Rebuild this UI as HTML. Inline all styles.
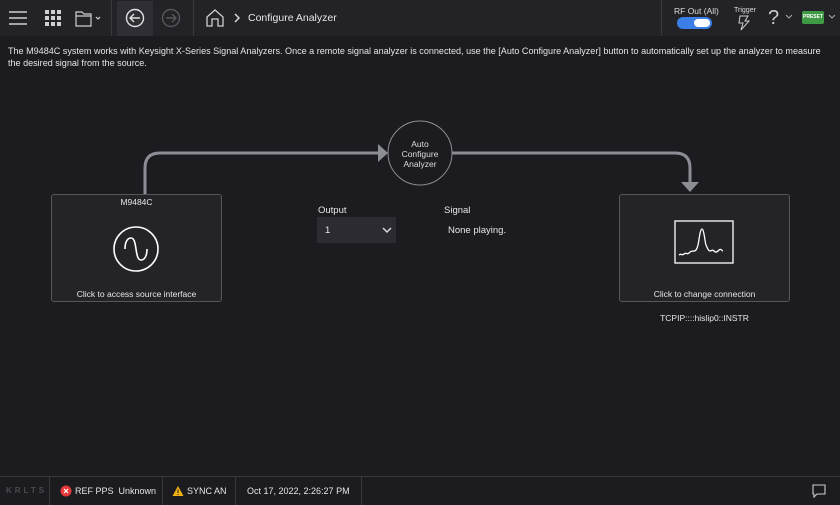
<!DOCTYPE html>
<html><head><meta charset="utf-8"><style>
*{margin:0;padding:0;box-sizing:border-box}
body{width:840px;height:504px;background:#1c1b20;font-family:"Liberation Sans",sans-serif;color:#e6e6e6;position:relative;overflow:hidden;font-size:11px}
.abs{position:absolute}
.top{left:0;top:0;width:840px;height:36px;background:#232227}
.bot{left:0;top:476px;width:840px;height:28px;background:#1c1b20;border-top:1px solid #38373c}
.vs{position:absolute;top:0;width:1px;height:28px;background:#38373c}
.card{border:1px solid #56555a;border-radius:3px;background:#242328}
</style></head><body>
<div class="abs top"></div>
<svg class="abs" style="left:8px;top:10px" width="20" height="16"><g stroke="#cfcfcf" stroke-width="1.5"><line x1="1" y1="2" x2="19" y2="2"/><line x1="1" y1="8" x2="19" y2="8"/><line x1="1" y1="14" x2="19" y2="14"/></g></svg>
<svg class="abs" style="left:45px;top:10px" width="16" height="16" fill="#d0d0d0"><rect x="0" y="0" width="4" height="4"/><rect x="6" y="0" width="4" height="4"/><rect x="12" y="0" width="4" height="4"/><rect x="0" y="6" width="4" height="4"/><rect x="6" y="6" width="4" height="4"/><rect x="12" y="6" width="4" height="4"/><rect x="0" y="12" width="4" height="4"/><rect x="6" y="12" width="4" height="4"/><rect x="12" y="12" width="4" height="4"/></svg>
<svg class="abs" style="left:75px;top:9px" width="28" height="18" fill="none" stroke="#cfcfcf" stroke-width="1.2"><path d="M1 3h6l2 2h7v12H1z M1 7h15"/><path d="M21 8l2 2 2-2"/></svg>
<div class="abs" style="left:111px;top:0;width:1px;height:36px;background:#3a393e"></div>
<div class="abs" style="left:117px;top:1px;width:36px;height:35px;background:#2f2e34"></div>
<svg class="abs" style="left:125px;top:8px" width="20" height="20" fill="none" stroke="#e0e0e0" stroke-width="1.4"><circle cx="10" cy="10" r="8.5"/><path d="M15 10H5.5M9 6l-4 4 4 4"/></svg>
<svg class="abs" style="left:161px;top:8px" width="20" height="20" fill="none" stroke="#58575c" stroke-width="1.4"><circle cx="10" cy="10" r="8.5"/><path d="M5 10h9.5M11 6l4 4-4 4"/></svg>
<div class="abs" style="left:193px;top:0;width:1px;height:36px;background:#3a393e"></div>
<svg class="abs" style="left:205px;top:8px" width="20" height="20" fill="none" stroke="#cfcfcf" stroke-width="1.3"><path d="M2 9L10 2l8 7v9H13v-7H7v7H2z"/></svg>
<svg class="abs" style="left:233px;top:13px" width="8" height="10" fill="none" stroke="#e0e0e0" stroke-width="1.4"><path d="M2 1l4 4-4 4"/></svg>
<div class="abs" style="left:248px;top:12px;font-size:10.5px;color:#e8e8e8">Configure Analyzer</div>
<div class="abs" style="left:661px;top:0;width:1px;height:36px;background:#3a393e"></div>
<div class="abs" style="left:674px;top:6px;font-size:8.5px;color:#ddd">RF Out (All)</div>
<div class="abs" style="left:677px;top:17px;width:35px;height:12px;border-radius:6px;background:#3a7ee6"></div>
<div class="abs" style="left:694px;top:19px;width:16px;height:8px;border-radius:4px;background:#fff"></div>
<div class="abs" style="left:734px;top:7px;font-size:7px;color:#ddd">Trigger</div>
<svg class="abs" style="left:737px;top:15px" width="14" height="16" fill="none" stroke="#ccc" stroke-width="1"><path d="M3 1h8l-3 5h4L4 15l2-7H2z"/></svg>
<div class="abs" style="left:768px;top:7px;font-size:20px;color:#ccc;font-weight:300">?</div>
<svg class="abs" style="left:785px;top:14px" width="8" height="6" fill="none" stroke="#aaa"><path d="M1 1l3 3 3-3"/></svg>
<div class="abs" style="left:802px;top:11px;width:22px;height:13px;background:#3f9a45;border-radius:2px;font-size:5px;color:#fff;text-align:center;line-height:13px;font-weight:bold">PRESET</div>
<svg class="abs" style="left:828px;top:14px" width="8" height="6" fill="none" stroke="#aaa"><path d="M1 1l3 3 3-3"/></svg>

<div class="abs" style="left:8px;top:45px;width:830px;font-size:9.05px;line-height:12px;color:#e6e6e6;white-space:nowrap">The M9484C system works with Keysight X-Series Signal Analyzers. Once a remote signal analyzer is connected, use the [Auto Configure Analyzer] button to automatically set up the analyzer to measure<br>the desired signal from the source.</div>

<svg class="abs" style="left:0;top:0" width="840" height="476" fill="none">
<path d="M145 194V168q0-15 15-15H380" stroke="#8c8e95" stroke-width="3"/>
<path d="M378 144l10 9-10 9z" fill="#8c8e95"/>
<path d="M452 153H675q15 0 15 15v14" stroke="#8c8e95" stroke-width="3"/>
<path d="M681 182h18l-9 10z" fill="#8c8e95"/>
<circle cx="420" cy="153" r="32" stroke="#8c8c90" stroke-width="1" fill="#1c1b20"/>
</svg>
<div class="abs" style="left:388px;top:139px;width:64px;text-align:center;font-size:8.5px;line-height:10px;color:#ddd">Auto<br>Configure<br>Analyzer</div>

<div class="abs card" style="left:51px;top:194px;width:171px;height:108px"></div>
<div class="abs" style="left:51px;top:197px;width:171px;text-align:center;font-size:8.5px">M9484C</div>
<svg class="abs" style="left:112px;top:225px" width="48" height="48" fill="none" stroke="#fff" stroke-width="1.6"><circle cx="24" cy="24" r="22"/><path d="M13 24c0-8 3-11 6-11s4 4 5 11 2 11 5 11 6-3 6-11"/></svg>
<div class="abs" style="left:51px;top:289px;width:171px;text-align:center;font-size:8.5px">Click to access source interface</div>

<div class="abs" style="left:318px;top:205px;font-size:9.5px">Output</div>
<div class="abs" style="left:317px;top:217px;width:79px;height:26px;background:#2c2b31"></div>
<div class="abs" style="left:325px;top:225px;font-size:9.5px">1</div>
<svg class="abs" style="left:382px;top:227px" width="10" height="7" fill="none" stroke="#ddd" stroke-width="1.4"><path d="M1 1l4 4 4-4"/></svg>
<div class="abs" style="left:444px;top:205px;font-size:9.5px">Signal</div>
<div class="abs" style="left:448px;top:225px;font-size:9.5px">None playing.</div>

<div class="abs card" style="left:619px;top:194px;width:171px;height:108px"></div>
<svg class="abs" style="left:673px;top:220px" width="62" height="45" fill="none" stroke="#fff" stroke-width="1.3"><rect x="2" y="1" width="58" height="42"/><path d="M6 35c2-2 3 1 5-1s3 1 5-1 3-2 5-2 3-2 4-6 2-16 4-16 3 14 4 16 2 6 4 6 2-2 4 0 3 1 5-1 3 1 4 1"/></svg>
<div class="abs" style="left:619px;top:289px;width:171px;text-align:center;font-size:8.5px">Click to change connection</div>
<div class="abs" style="left:619px;top:313px;width:171px;text-align:center;font-size:8.5px">TCPIP::::hislip0::INSTR</div>

<div class="abs bot">
<div style="position:absolute;left:6px;top:9px;font-size:8px;letter-spacing:3px;color:#4a4a4f;font-weight:bold">KRLTS</div>
<div class="vs" style="left:49px"></div>
<svg style="position:absolute;left:60px;top:8px" width="12" height="12"><circle cx="6" cy="6" r="5.5" fill="#e5393a"/><path d="M4 4l4 4M8 4l-4 4" stroke="#fff" stroke-width="1.2"/></svg>
<div style="position:absolute;left:75px;top:9px;font-size:9px">REF PPS&nbsp; Unknown</div>
<div class="vs" style="left:162px"></div>
<svg style="position:absolute;left:172px;top:8px" width="12" height="12"><path d="M6 1l5.5 10H0.5z" fill="#f2b312"/><path d="M6 4.5v3.5M6 9v1" stroke="#222" stroke-width="1"/></svg>
<div style="position:absolute;left:187px;top:9px;font-size:9px">SYNC AN</div>
<div class="vs" style="left:235px"></div>
<div style="position:absolute;left:247px;top:9px;font-size:9px">Oct 17, 2022, 2:26:27 PM</div>
<div class="vs" style="left:361px"></div>
<svg style="position:absolute;left:812px;top:7px" width="14" height="14" fill="none" stroke="#ccc" stroke-width="1.1"><path d="M1 1h12v9H5l-3 3v-3H1z"/></svg>
</div>
</body></html>
